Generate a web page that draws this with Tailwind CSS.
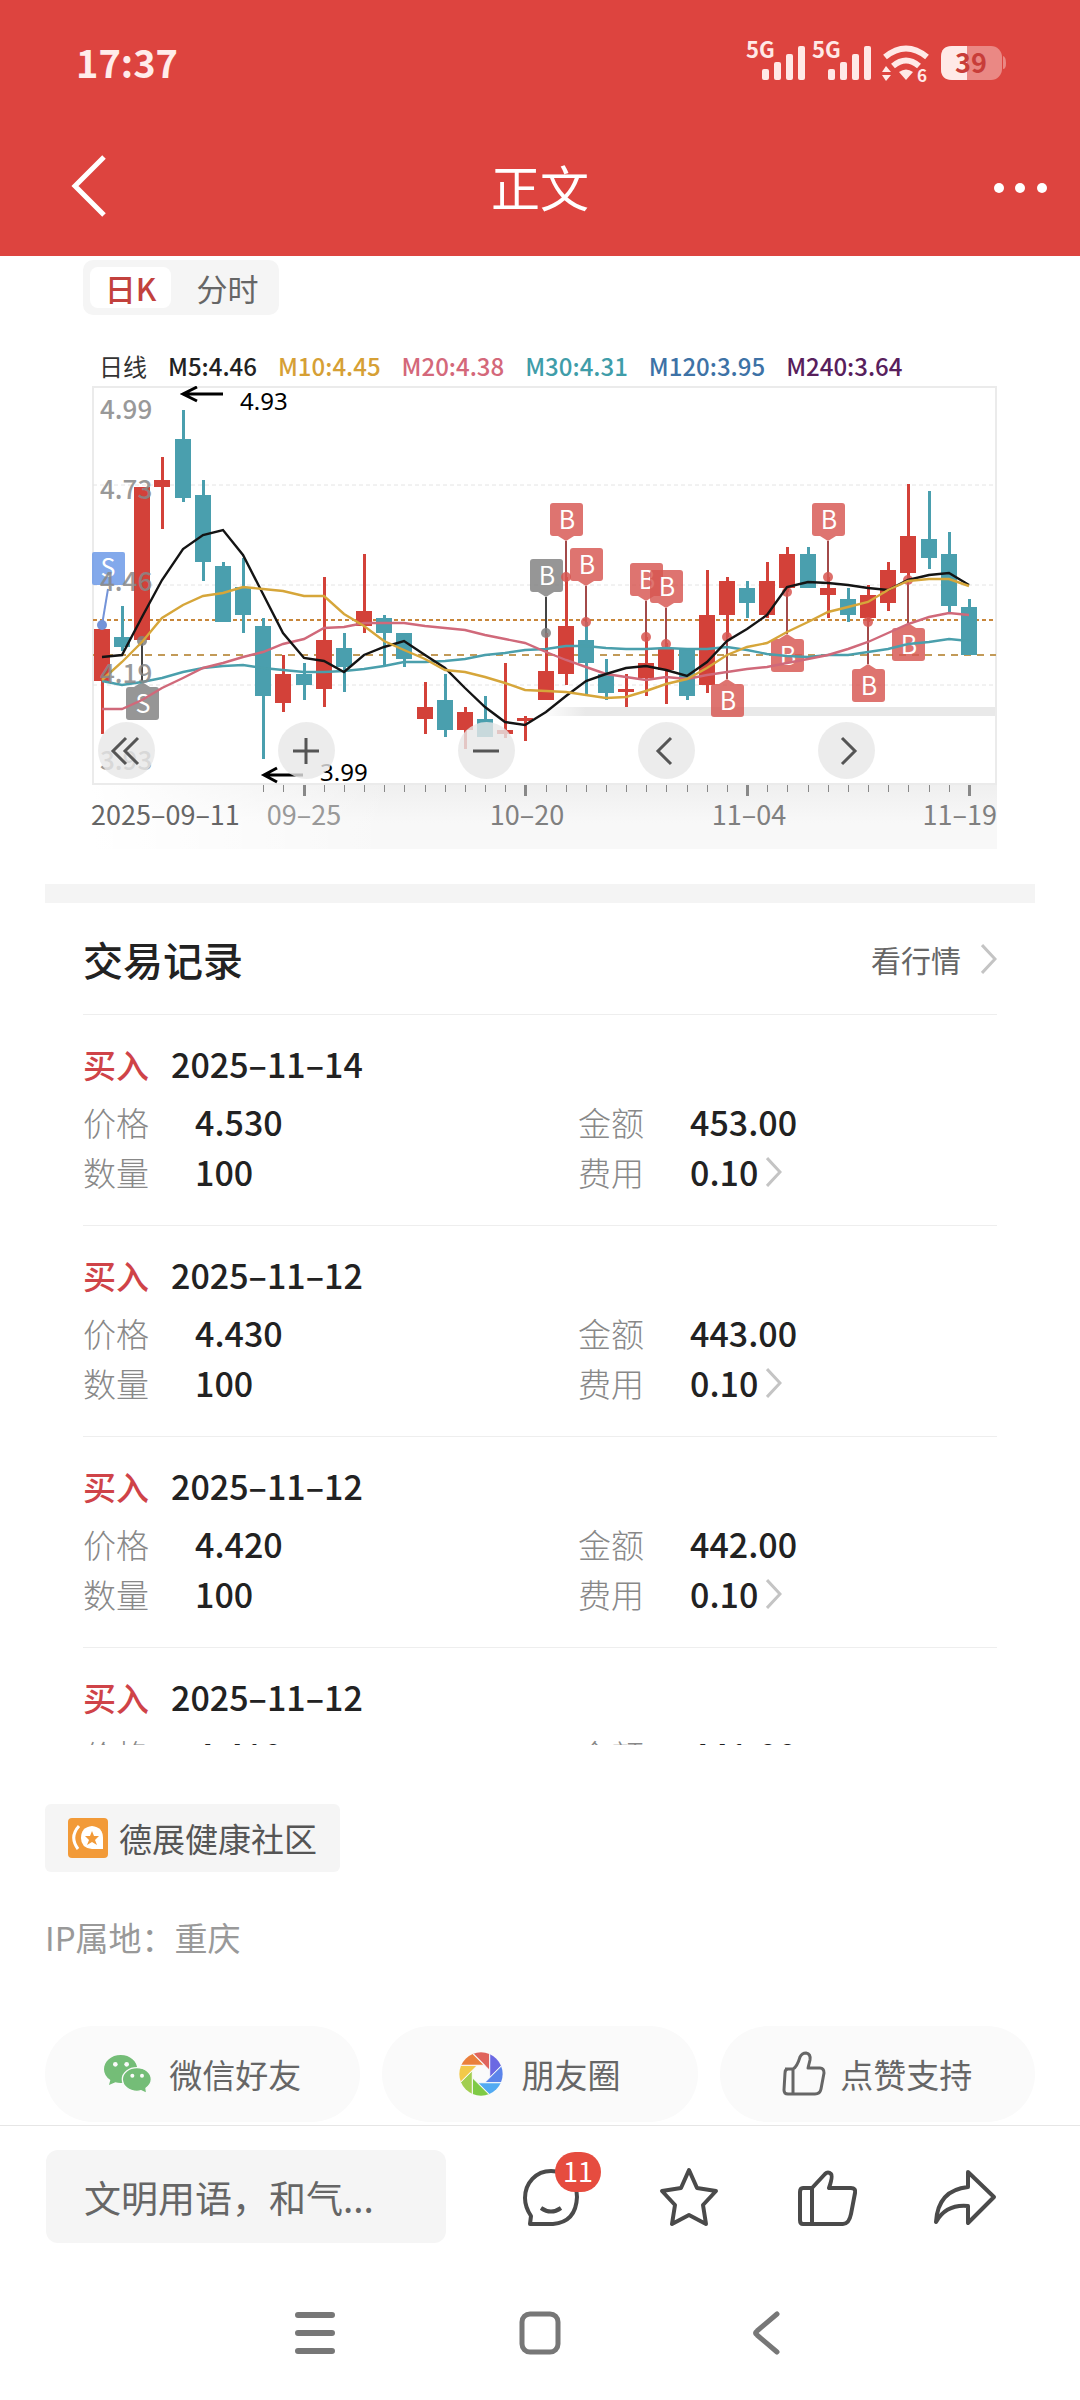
<!DOCTYPE html>
<html lang="zh-CN">
<head>
    <meta charset="UTF-8">
    <meta name="viewport" content="width=device-width, initial-scale=1.0">
    <title>正文</title>
    <script src="https://cdn.jsdelivr.net/npm/@tailwindcss/browser@4"></script>
</head>
<body class="bg-white font-['Noto_Sans_CJK_SC',sans-serif] text-[#222]">
    <div class="min-h-screen flex flex-col">
        <!-- Header -->
        <header class="bg-[#dd443f] text-white">
            <div class="h-[124px] pl-[76px] pr-[72px] flex items-center justify-between">
                <span class="text-[38px] leading-[48px] font-bold text-[#ffecea]">17:37</span>
                <svg class="w-[266px] h-[60px]" viewBox="740 32 266 60" fill="#ffe9e7" aria-hidden="true">
                    <g font-size="22" font-weight="700">
                        <text x="744" y="58">5G</text>
                        <text x="810" y="58">5G</text>
                    </g>
                    <rect x="760" y="69" width="7" height="11" rx="2" />
                    <rect x="772" y="62" width="7" height="18" rx="2" />
                    <rect x="784" y="54" width="7" height="26" rx="2" />
                    <rect x="796" y="46" width="7" height="34" rx="2" />
                    <rect x="826" y="69" width="7" height="11" rx="2" />
                    <rect x="838" y="62" width="7" height="18" rx="2" />
                    <rect x="850" y="54" width="7" height="26" rx="2" />
                    <rect x="862" y="46" width="7" height="34" rx="2" />
                    <path d="M883 57Q904 40 925 57M891 66Q904 55 917 66" fill="none" stroke="#ffe9e7" stroke-width="6" />
                    <path d="M897 72Q904 67 911 72L904 80ZM880 72L884 66L889 72ZM880 75H889L884 81Z" />
                    <text x="915" y="82" font-size="17" font-weight="700">6</text>
                    <rect x="939" y="46" width="61" height="34" rx="11" fill="#ea8884" />
                    <path d="M1001 56Q1004 57 1004 63T1001 69Z" fill="#ea8884" />
                    <path d="M965 46H950Q939 46 939 57V69Q939 80 950 80H965Z" />
                    <text x="953" y="73" font-size="27" font-weight="700" fill="#c83d39">39</text>
                </svg>
            </div>
            <div class="h-[132px] pl-[68px] pr-[32px] pb-2 grid grid-cols-[1fr_auto_1fr] items-center">
                <button class="w-[42px] h-[64px]" aria-label="返回">
                    <svg class="w-full h-full" viewBox="0 0 42 64" fill="none" stroke="currentColor" stroke-width="5"><path d="M36 3L7 32L36 61" /></svg>
                </button>
                <h1 class="-ml-[36px] text-[49px] leading-[64px]">正文</h1>
                <button class="justify-self-end w-[56px] h-[64px]" aria-label="更多">
                    <svg class="w-full h-full" viewBox="0 0 56 64" fill="currentColor"><circle cx="7" cy="34" r="5" /><circle cx="28" cy="34" r="5" /><circle cx="50" cy="34" r="5" /></svg>
                </button>
            </div>
        </header>

        <main class="px-[45px]">
            <section class="px-[38px] pt-1">
                <div class="inline-flex items-center h-[55px] px-[7px] rounded-[10px] bg-[#f5f5f5] text-[31px] leading-[41px]">
                    <button class="w-[81px] h-[41px] rounded-lg bg-white text-[#c2413d] font-medium">日K</button>
                    <button class="w-[101px] h-[41px] pl-3 text-[#666]">分时</button>
                </div>

                <div class="mt-[34px] h-[37px] pl-[16px] pb-1 flex items-center gap-[21px] text-[24px] leading-[32px] font-medium whitespace-nowrap">
                    <span class="font-normal text-[#333]">日线</span>
                    <span>M5:4.46</span>
                    <span class="text-[#d6a035]">M10:4.45</span>
                    <span class="text-[#d4687a]">M20:4.38</span>
                    <span class="text-[#3f9da9]">M30:4.31</span>
                    <span class="text-[#3d72a6]">M120:3.95</span>
                    <span class="text-[#58205c]">M240:3.64</span>
                </div>

                <div class="relative">
                    <svg id="kline" class="block w-full" viewBox="83 386 914 464" role="img" aria-label="日K线图"></svg>
                    <div class="absolute left-[15px] bottom-[71px] flex gap-[123px]">
                        <button class="size-[57px] rounded-full bg-[#e7e7e7]/80" aria-label="最早">
                            <svg class="size-full" viewBox="0 0 57 57" fill="none" stroke="#555" stroke-width="3"><path d="M28 16L15 29L28 42M40 16L27 29L40 42" /></svg>
                        </button>
                        <button class="size-[57px] rounded-full bg-[#e7e7e7]/80" aria-label="放大">
                            <svg class="size-full" viewBox="0 0 57 57" fill="none" stroke="#555" stroke-width="3"><path d="M15 29H41M28 16V42" /></svg>
                        </button>
                        <button class="size-[57px] rounded-full bg-[#e7e7e7]/80" aria-label="缩小">
                            <svg class="size-full" viewBox="0 0 57 57" fill="none" stroke="#555" stroke-width="3"><path d="M15 29H41" /></svg>
                        </button>
                        <button class="size-[57px] rounded-full bg-[#e7e7e7]/80" aria-label="左移">
                            <svg class="size-full" viewBox="0 0 57 57" fill="none" stroke="#555" stroke-width="3"><path d="M33 16L20 29L33 42" /></svg>
                        </button>
                        <button class="size-[57px] rounded-full bg-[#e7e7e7]/80" aria-label="右移">
                            <svg class="size-full" viewBox="0 0 57 57" fill="none" stroke="#555" stroke-width="3"><path d="M24 16L37 29L24 42" /></svg>
                        </button>
                    </div>
                </div>
            </section>

            <div class="mt-[34px] h-[19px] bg-[#f4f4f4]"></div>

            <!-- Trade records -->
            <section class="px-[38px]">
                <div class="h-[111px] flex items-center justify-between">
                    <h2 class="text-[40px] leading-[56px] font-medium">交易记录</h2>
                    <a href="#" class="flex items-center gap-[20px] text-[30px] leading-[40px] text-[#666]">
                        看行情
                        <svg class="w-[16px] h-[30px]" viewBox="0 0 16 30" fill="none" stroke="#c4c4c4" stroke-width="3"><path d="M1 1L14 15L1 29" /></svg>
                    </a>
                </div>
                <div id="records" class="max-h-[731px] overflow-hidden"></div>
            </section>

            <a href="#" class="mt-[59px] inline-flex items-center gap-[11px] h-[68px] px-[23px] rounded-md bg-[#f5f5f5] text-[33px] leading-[48px] text-[#555]">
                <svg class="size-[40px]" viewBox="0 0 40 40" fill="none" aria-hidden="true">
                    <rect width="40" height="40" rx="4" fill="#f29a38" />
                    <path d="M11 8Q1 19 10 31" stroke="#fff" stroke-width="3" />
                    <path d="M24 8Q35 9 35 20V31H24Q13 30 13 20Q13 9 24 8Z" fill="#fff" />
                    <path d="M24 13L26 18L31 18L27 22L29 27L24 24L19 27L21 22L17 18L22 18Z" fill="#f29a38" />
                </svg>
                德展健康社区
            </a>

            <p class="mt-[41px] text-[33px] leading-[48px] text-[#999]">IP属地：重庆</p>

            <div class="mt-[65px] mb-[3px] grid grid-cols-3 gap-[22px] text-[33px] leading-[48px] text-[#666]">
                <button class="h-[96px] rounded-full bg-[#fafafa] flex items-center justify-center gap-[17px]">
                    <svg class="w-[48px] h-[40px]" viewBox="197 165 144 120" fill="#74bd77" aria-hidden="true">
                        <path d="M247 168C275 168 297 187 297 211S275 252 247 252Q239 252 231 250L212 258L216 243Q197 231 197 211C197 187 219 168 247 168Z" />
                        <path d="M296 206C320 206 339 221 339 241Q339 256 323 268L325 283L308 275Q302 277 296 277C272 277 252 261 252 241S272 206 296 206Z" stroke="#fafafa" stroke-width="4" />
                        <g fill="#fafafa"><circle cx="231" cy="196" r="7" /><circle cx="265" cy="196" r="7" /><circle cx="282" cy="230" r="6" /><circle cx="311" cy="230" r="6" /></g>
                    </svg>
                    微信好友
                </button>
                <button class="h-[96px] rounded-full bg-[#fafafa] flex items-center justify-center gap-[18px]">
                    <svg class="size-[44px]" viewBox="-66 -66 132 132" aria-hidden="true">
                        <clipPath id="disc"><circle r="65" /></clipPath>
                        <g clip-path="url(#disc)" stroke="#fafafa" stroke-width="3">
                            <path d="M26 -11V-80H-43Z" fill="#e0645c" />
                            <path d="M26 -11V-80H-43Z" fill="#6b68e2" transform="rotate(45)" />
                            <path d="M26 -11V-80H-43Z" fill="#5b84ea" transform="rotate(90)" />
                            <path d="M26 -11V-80H-43Z" fill="#52aaf2" transform="rotate(135)" />
                            <path d="M26 -11V-80H-43Z" fill="#7fca45" transform="rotate(180)" />
                            <path d="M26 -11V-80H-43Z" fill="#a2ce50" transform="rotate(225)" />
                            <path d="M26 -11V-80H-43Z" fill="#f2c94a" transform="rotate(270)" />
                            <path d="M26 -11V-80H-43Z" fill="#ea7f3b" transform="rotate(315)" />
                        </g>
                    </svg>
                    朋友圈
                </button>
                <button class="h-[96px] rounded-full bg-[#fafafa] flex items-center justify-center gap-[14px]">
                    <svg class="w-[44px] h-[46px]" viewBox="0 0 44 46" fill="none" stroke="#666" stroke-width="3" stroke-linejoin="round" aria-hidden="true">
                        <path d="M3 18H11Q15 16 18 6Q20 2 24 2Q29 3 28 9L26 17H38Q42 17 42 22L39 38Q38 43 33 43H6Q2 43 2 39L3 22Q3 18 6 18M11 18V43" />
                    </svg>
                    点赞支持
                </button>
            </div>
        </main>

        <!-- Bottom bar -->
        <footer class="border-t border-[#e6e6e6]">
            <div class="pt-[24px] px-[46px] flex items-center">
                <input type="text" aria-label="评论" placeholder="文明用语，和气..." class="w-[400px] h-[93px] pl-[38px] rounded-xl bg-[#f5f5f5] text-[37px] placeholder:text-[#666] outline-none">
                <div class="ml-[36px] flex-1 grid grid-cols-4 justify-items-center">
                    <button class="relative w-[60px] h-[60px]" aria-label="评论列表">
                        <svg class="size-full" viewBox="0 0 60 60" fill="none" stroke="#4a4a4a" stroke-width="4" stroke-linejoin="round"><path d="M9 57L10 49Q4 40 4 31C4 16 15 4 30 4S56 15 56 30Q55 55 32 57ZM20 41Q30 48 40 41" /></svg>
                        <span class="absolute -top-[15px] left-[34px] w-[46px] h-[40px] rounded-full bg-[#e64c3f] text-white text-[27px] leading-[38px]">11</span>
                    </button>
                    <button class="w-[60px] h-[60px]" aria-label="收藏">
                        <svg class="size-full" viewBox="0 0 60 60" fill="none" stroke="#4a4a4a" stroke-width="4" stroke-linejoin="round"><path d="M30 3L38 21L57 24L44 38L47 57L30 48L13 57L16 38L3 24L22 21Z" /></svg>
                    </button>
                    <button class="w-[60px] h-[60px]" aria-label="点赞">
                        <svg class="size-full" viewBox="0 0 60 60" fill="none" stroke="#4a4a4a" stroke-width="4" stroke-linejoin="round"><path d="M15 21L28 7Q31 4 34 7Q36 9 32 21H54Q59 21 58 26L54 47Q52 57 46 57H6Q3 57 3 53V25Q3 21 6 21ZM15 21V57" /></svg>
                    </button>
                    <button class="w-[64px] h-[60px]" aria-label="分享">
                        <svg class="size-full" viewBox="0 0 64 60" fill="none" stroke="#4a4a4a" stroke-width="4" stroke-linejoin="round"><path d="M35 5L61 30L35 56V39Q13 37 3 55Q5 23 35 20Z" /></svg>
                    </button>
                </div>
            </div>
            <nav class="pt-[68px] pb-[40px] flex justify-center gap-[182px]">
                <button class="size-[44px]" aria-label="任务">
                    <svg class="size-full" viewBox="0 0 44 44" fill="none" stroke="#777" stroke-width="6" stroke-linecap="round"><path d="M6 4H40M6 22H40M6 40H40" /></svg>
                </button>
                <button class="size-[44px]" aria-label="主页">
                    <svg class="size-full" viewBox="0 0 44 44" fill="none" stroke="#777" stroke-width="5"><rect x="4" y="3" width="36" height="38" rx="8" /></svg>
                </button>
                <button class="size-[44px]" aria-label="返回上一页">
                    <svg class="size-full" viewBox="0 0 44 44" fill="none" stroke="#777" stroke-width="5" stroke-linecap="round" stroke-linejoin="round"><path d="M33 3L13 20Q10 22 13 24L33 41" /></svg>
                </button>
            </nav>
        </footer>
    </div>

    <script>
        // Trade records
        const records = [
            { date: '2025–11–14', price: '4.530', amount: '453.00', count: '100', fee: '0.10' },
            { date: '2025–11–12', price: '4.430', amount: '443.00', count: '100', fee: '0.10' },
            { date: '2025–11–12', price: '4.420', amount: '442.00', count: '100', fee: '0.10' },
            { date: '2025–11–12', price: '4.410', amount: '441.00', count: '100', fee: '0.10' }
        ];

        document.getElementById('records').innerHTML = records.map(r => `
            <article class="h-[211px] border-t border-[#eee] pt-[25px] text-[34px]">
                <h3 class="flex items-center gap-[22px] leading-[48px] font-medium">
                    <span class="text-[#cf4348] text-[33px]">买入</span>
                    <span>${r.date}</span>
                </h3>
                <dl class="mt-[9px] grid grid-cols-[13fr_11fr] leading-[50px] font-medium">
                    <div class="flex"><dt class="w-[112px] text-[33px] font-light text-[#888]">价格</dt><dd>${r.price}</dd></div>
                    <div class="flex"><dt class="w-[112px] text-[33px] font-light text-[#888]">金额</dt><dd>${r.amount}</dd></div>
                    <div class="flex"><dt class="w-[112px] text-[33px] font-light text-[#888]">数量</dt><dd>${r.count}</dd></div>
                    <div class="flex">
                        <dt class="w-[112px] text-[33px] font-light text-[#888]">费用</dt>
                        <dd class="flex items-center gap-[8px]">${r.fee}
                            <svg class="w-[16px] h-[30px]" viewBox="0 0 16 30" fill="none" stroke="#c4c4c4" stroke-width="3"><path d="M1 1L14 15L1 29" /></svg>
                        </dd>
                    </div>
                </dl>
            </article>
        `).join('');

        // Candles: direction, wick top, body top, body bottom, wick bottom
        const candles = [
            ['r', 629, 629, 681, 734], ['g', 606, 637, 647, 651], ['r', 487, 487, 640, 640], ['r', 457, 480, 487, 529],
            ['g', 410, 439, 498, 502], ['g', 480, 495, 562, 581], ['g', 562, 566, 622, 622], ['g', 558, 587, 615, 633],
            ['g', 618, 626, 696, 759], ['r', 655, 674, 703, 712], ['g', 663, 674, 685, 700], ['r', 577, 640, 689, 707],
            ['g', 633, 648, 667, 692], ['r', 554, 611, 626, 633], ['g', 615, 618, 633, 667], ['g', 633, 633, 659, 667],
            ['r', 682, 707, 719, 734], ['g', 674, 700, 730, 737], ['r', 707, 712, 730, 749], ['g', 696, 719, 737, 737],
            ['r', 663, 730, 734, 738], ['r', 716, 718, 721, 741], ['r', 633, 671, 700, 700], ['r', 577, 626, 674, 685],
            ['g', 622, 640, 663, 696], ['g', 659, 674, 693, 700], ['r', 674, 689, 692, 707], ['r', 637, 663, 678, 696],
            ['r', 643, 648, 670, 704], ['g', 648, 648, 696, 700], ['r', 570, 615, 685, 693], ['r', 577, 581, 615, 637],
            ['g', 581, 588, 603, 618], ['r', 562, 581, 615, 618], ['r', 547, 554, 588, 592], ['g', 547, 554, 588, 588],
            ['r', 577, 588, 595, 618], ['g', 588, 599, 615, 622], ['r', 585, 595, 618, 622], ['r', 562, 570, 603, 611],
            ['r', 484, 536, 573, 580], ['g', 491, 539, 558, 569], ['g', 532, 554, 606, 614], ['g', 599, 607, 655, 655]
        ];

        // Moving averages
        const averages = [
            { color: '#4a9fac', y: [681, 685, 682, 678, 672, 668, 666, 665, 668, 670, 672, 672, 671, 669, 666, 662, 662, 661, 659, 655, 653, 650, 649, 646, 646, 648, 649, 649, 648, 649, 649, 647, 650, 654, 656, 657, 655, 655, 652, 649, 644, 642, 639, 641] },
            { color: '#d0697a', y: [709, 709, 700, 688, 678, 668, 663, 657, 652, 644, 639, 628, 627, 623, 623, 623, 626, 628, 630, 635, 639, 643, 652, 660, 667, 674, 677, 680, 677, 679, 675, 672, 669, 667, 663, 659, 655, 649, 642, 633, 624, 617, 613, 615] },
            { color: '#141414', y: [657, 655, 617, 580, 549, 535, 530, 555, 594, 633, 658, 661, 672, 655, 647, 641, 655, 668, 688, 707, 722, 725, 712, 696, 681, 674, 668, 666, 670, 676, 662, 641, 629, 615, 587, 582, 583, 585, 588, 590, 580, 575, 573, 585] },
            { color: '#d6a63a', y: [680, 662, 642, 618, 605, 596, 593, 587, 589, 591, 596, 596, 614, 626, 641, 650, 659, 670, 672, 677, 683, 690, 691, 692, 695, 698, 697, 691, 684, 679, 668, 655, 647, 643, 632, 622, 612, 607, 602, 590, 581, 579, 579, 586] }
        ];

        // Trade pins: candle index, letter, colour, top of the flag, dot
        const pins = [
            [2, 'S', '#808080', 687, 641], [22, 'B', '#808080', 559, 633], [23, 'B', '#d75651', 503, 577],
            [24, 'B', '#d75651', 548, 622], [27, 'B', '#d75651', 563, 637], [28, 'B', '#d75651', 570, 644],
            [31, 'B', '#d75651', 684, 637], [34, 'B', '#d75651', 639, 592], [36, 'B', '#d75651', 503, 577],
            [38, 'B', '#d75651', 669, 622], [40, 'B', '#d75651', 628, 580]
        ];

        const x = i => Math.round(102 + i * 20.16);
        const fills = { r: '#d34139', g: '#4a9fae' };

        let out = `
            <defs>
                <linearGradient id="band" x2="0" y2="1"><stop stop-color="#efefef" /><stop offset="0.6" stop-color="#f8f8f8" /></linearGradient>
                <linearGradient id="bandFade"><stop stop-color="#fff" /><stop offset="1" stop-color="#fff" stop-opacity="0" /></linearGradient>
                <linearGradient id="barFade"><stop stop-color="#e9e9e9" stop-opacity="0" /><stop offset="0.1" stop-color="#e9e9e9" /></linearGradient>
            </defs>
            <rect x="92" y="784" width="905" height="65" fill="url(#band)" />
            <rect x="92" y="784" width="300" height="65" fill="url(#bandFade)" />
            <rect x="540" y="707" width="457" height="9" fill="url(#barFade)" />
            <rect x="93" y="387" width="903" height="397" fill="none" stroke="#ebebeb" stroke-width="2" />
            <path d="M93 485H996M93 585H996M93 685H996" stroke="#e4e4e4" stroke-width="1" stroke-dasharray="4 3" />
            <path d="M93 620H996" stroke="#c8863a" stroke-width="2" stroke-dasharray="4 3" />
            <path d="M93 655H996" stroke="#c29a58" stroke-width="2" stroke-dasharray="7 6" />`;

        candles.forEach(([dir, high, top, bottom, low], i) => {
            out += `<rect x="${x(i) - 1}" y="${high}" width="3" height="${low - high}" fill="${fills[dir]}" />
                <rect x="${x(i) - 8}" y="${top}" width="16" height="${bottom - top}" fill="${fills[dir]}" />`;
        });

        // First sale sits on the left border, its stem is slanted
        out += `<path d="M108 589L102 625" stroke="#7393d8" stroke-width="2" /><circle cx="102" cy="625" r="5" fill="#7393d8" />
            <rect x="92" y="552" width="33" height="33" rx="2" fill="#6d9ae8" opacity="0.85" />
            <text x="108" y="577" text-anchor="middle" font-size="25" fill="#fff">S</text>`;

        pins.forEach(([i, letter, color, top, dot]) => {
            const cx = x(i);
            const above = top < dot;
            const tip = above ? top + 38 : top - 5;
            const base = above ? top + 33 : top;
            out += `<path d="M${cx} ${tip}V${dot}" stroke="${color === '#808080' ? '#444' : '#a34a4a'}" stroke-width="2" />
                <circle cx="${cx}" cy="${dot}" r="5" fill="${color}" opacity="0.85" />
                <g fill="${color}" opacity="0.82"><rect x="${cx - 16}" y="${top}" width="33" height="33" rx="3" /><path d="M${cx - 8} ${base}L${cx} ${tip}L${cx + 8} ${base}Z" /></g>
                <text x="${cx + 1}" y="${top + 26}" text-anchor="middle" font-size="25" fill="#fff">${letter}</text>`;
        });

        averages.forEach(line => {
            out += `<polyline points="${line.y.map((y, i) => `${x(i)},${y}`).join(' ')}" fill="none" stroke="${line.color}" stroke-width="2.4" />`;
        });

        // Price labels
        [['4.99', 419], ['4.73', 499], ['4.46', 591], ['4.19', 683], ['3.93', 770]].forEach(([label, y]) => {
            out += `<text x="100" y="${y}" font-size="26" font-weight="500" fill="#888" opacity="0.85">${label}</text>`;
        });

        // Time axis
        for (let i = 8; i < 44; i++) {
            const major = i % 11 === 10;
            out += major ? `<rect x="${x(i) - 1}" y="785" width="3" height="11" fill="#888" />` : `<rect x="${x(i)}" y="785" width="1" height="7" fill="#888" />`;
        }
        out += `<g font-size="27" fill="#808080">
                <text x="91" y="825" fill="#666">2025–09–11</text>
                <text x="304" y="825" text-anchor="middle" fill="#999">09–25</text>
                <text x="527" y="825" text-anchor="middle">10–20</text>
                <text x="749" y="825" text-anchor="middle">11–04</text>
                <text x="997" y="825" text-anchor="end">11–19</text>
            </g>
            <g fill="none" stroke="#000" stroke-width="3"><path d="M223 394H183M197 387L183 394L197 401" /><path d="M303 775H264M277 768L264 775L277 782" /></g>
            <g font-size="24" font-family="Noto Sans" fill="#000"><text x="240" y="410">4.93</text><text x="320" y="781">3.99</text></g>`;

        document.getElementById('kline').innerHTML = out;
    </script>
</body>
</html>
